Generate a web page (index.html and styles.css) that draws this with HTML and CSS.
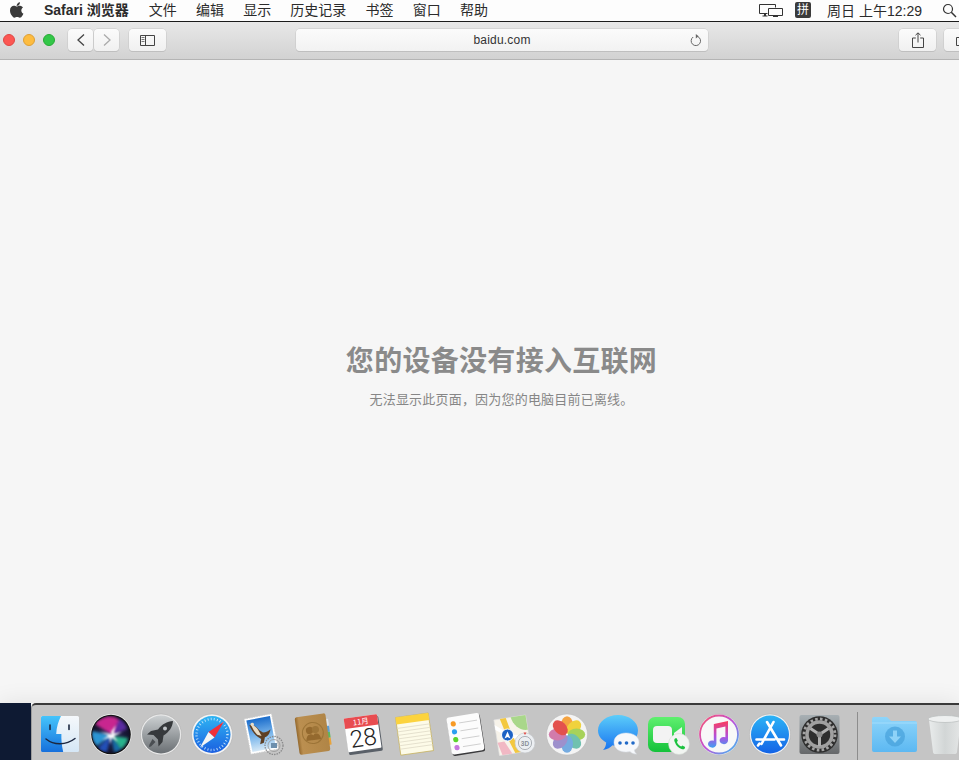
FILE: index.html
```html
<!DOCTYPE html>
<html lang="zh">
<head>
<meta charset="utf-8">
<title>baidu.com</title>
<link rel="stylesheet" href="styles.css">
</head>
<body>
<div class="screen">
  <header class="menubar">
    <svg class="apple" viewBox="0 0 14 16" width="14" height="16"><path fill="#3a3a3a" d="M9.900 0.200c.1 1-.3 1.900-.8 2.600-.6.700-1.500 1.200-2.400 1.100-.1-.9.3-1.900.9-2.500C8.200.7 9.200.2 9.900.2zM13 5.400c-.1.100-1.700 1-1.700 3 0 2.300 2 3.100 2.100 3.100 0 .1-.3 1.100-1.100 2.200-.7 1-1.400 2-2.500 2-1.100 0-1.400-.6-2.700-.6-1.200 0-1.700.6-2.700.6-1.100 0-1.800-.9-2.600-2.100C.7 12.200 0 10.200 0 8.400c0-3 2-4.600 3.900-4.600 1.100 0 1.900.7 2.600.7.700 0 1.700-.8 3-.8.500 0 2.300.1 3.500 1.700z"/></svg>
    <nav class="menus">
      <span class="menu strong">Safari 浏览器</span>
      <span class="menu">文件</span>
      <span class="menu">编辑</span>
      <span class="menu">显示</span>
      <span class="menu">历史记录</span>
      <span class="menu">书签</span>
      <span class="menu">窗口</span>
      <span class="menu">帮助</span>
    </nav>
    <div class="status">
      <svg class="airplay" viewBox="0 0 24 15" width="24" height="15"><path fill="none" stroke="#333" stroke-width="1" d="M8.500 10.500H.5V1.500h16v3M9.500 5.500h14v7h-14z"/><path fill="#333" d="M3.500 12.500h5v1h-5zM5 10.500h2v2H5zM14 12.500h5v1.500h-5zM15.500 12h2v1h-2z"/></svg>
      <span class="ime">拼</span>
      <span class="clock">周日 上午12:29</span>
      <svg class="search" viewBox="0 0 15 15" width="15" height="15"><circle cx="6" cy="6" r="4.500" fill="none" stroke="#333" stroke-width="1.200"/><path d="M9.300 9.300l4.700 4.700" stroke="#333" stroke-width="1.500"/></svg>
    </div>
  </header>

  <section class="toolbar">
    <div class="lights">
      <i class="light red"></i><i class="light yellow"></i><i class="light green"></i>
    </div>
    <div class="nav-pair">
      <button class="btn nav"><svg viewBox="0 0 10 14" width="10" height="14"><path d="M8 1.500L2 7l6 5.500" fill="none" stroke="#444" stroke-width="1.300"/></svg></button>
      <button class="btn nav"><svg viewBox="0 0 10 14" width="10" height="14"><path d="M2 1.500L8 7l-6 5.500" fill="none" stroke="#aaa" stroke-width="1.300"/></svg></button>
    </div>
    <button class="btn side"><svg viewBox="0 0 15 11" width="15" height="11"><path d="M.5.500h14v10H.5zM5.500.500v10" fill="none" stroke="#444"/><path d="M1.500 2.500h3M1.500 4.500h3M1.500 6.500h3" stroke="#777"/></svg></button>
    <div class="address">
      <span class="url">baidu.com</span>
      <svg class="reload" viewBox="0 0 12 13" width="12" height="13"><path d="M7.800 2.600A4.700 4.700 0 1 1 3.200 3" fill="none" stroke="#666"/><path d="M5.800 0v4.400l2.800-2.200z" fill="#666"/></svg>
    </div>
    <button class="btn share"><svg viewBox="0 0 12 16" width="12" height="16"><path d="M3.800 6H.5v9.500h11V6H8.200M6 10.500V1M3.500 3.200L6 .8l2.500 2.400" fill="none" stroke="#444"/></svg></button>
    <button class="btn tabs"><svg viewBox="0 0 14 12" width="14" height="12"><path d="M.5 3.500h9v8h-9z" fill="none" stroke="#444"/></svg></button>
  </section>

  <main class="page">
    <h1 class="title">您的设备没有接入互联网</h1>
    <p class="sub">无法显示此页面，因为您的电脑目前已离线。</p>
  </main>

  <footer class="bottom">
    <div class="wallpaper"></div>
    <div class="dock">
      <!-- Finder -->
      <svg class="icon" viewBox="0 0 44 44"><defs><linearGradient id="fb" x1="0" y1="0" x2="0" y2="1"><stop offset="0" stop-color="#45c4fb"/><stop offset="1" stop-color="#1670dc"/></linearGradient><linearGradient id="fw" x1="0" y1="0" x2="0" y2="1"><stop offset="0" stop-color="#f5f8fb"/><stop offset="1" stop-color="#d5e7f6"/></linearGradient></defs><rect x="3" y="4" width="38" height="36" rx="1.500" fill="url(#fw)"/><path d="M4.500 4H23c-2.500 5-4.500 11-4.800 18h5.200c-.2 5 .2 11 1.800 18H4.500A1.500 1.500 0 0 1 3 38.500v-33A1.500 1.500 0 0 1 4.500 4z" fill="url(#fb)"/><path d="M12 13v4.500M31 13v4.500" stroke="#1c2740" stroke-width="1.600" stroke-linecap="round"/><path d="M8 27c8 6.500 20 6.500 29-.5" fill="none" stroke="#1c2740" stroke-width="1.500" stroke-linecap="round"/></svg>
      <!-- Siri -->
      <svg class="icon" viewBox="0 0 44 44"><defs><radialGradient id="sb" cx=".5" cy=".5" r=".55"><stop offset="0" stop-color="#2e2e66"/><stop offset="1" stop-color="#0e0e20"/></radialGradient><filter id="sblur" x="-20%" y="-20%" width="140%" height="140%"><feGaussianBlur stdDeviation="1.800"/></filter><filter id="sblur2" x="-30%" y="-30%" width="160%" height="160%"><feGaussianBlur stdDeviation="1"/></filter><clipPath id="sclip"><circle cx="22" cy="22.500" r="18.800"/></clipPath></defs><circle cx="22" cy="22.500" r="20.500" fill="#f2f2f2"/><circle cx="22" cy="22.500" r="19.800" fill="#111"/><circle cx="22" cy="22.500" r="18.800" fill="url(#sb)"/><g clip-path="url(#sclip)"><g filter="url(#sblur)"><path d="M6 12C12 4 24 2 30 8L23 23z" fill="#c8258f"/><path d="M30 7c4 2 7 6 8 10L23 23z" fill="#5a2aa0"/><path d="M3 19c-1 6 1 11 5 15L22 23z" fill="#2a95d4"/><path d="M9 36c3 3 6 4 9 4L22 23z" fill="#2450b8"/><path d="M23 24L39 26c-1 5-3 8-7 11z" fill="#28b48c"/><path d="M22 24l3 16c3 0 5-1 7-3z" fill="#186aa8"/></g><path d="M23 22.500L19 14 22 20 27 13 24.500 21.500 33 20 25 24 29 30 23 25.500 21 32 20.500 25.500 13 28 19.500 23.500 11 20z" fill="#fff" filter="url(#sblur2)"/></g></svg>
      <!-- Launchpad -->
      <svg class="icon" viewBox="0 0 44 44"><defs><linearGradient id="lp" x1="0" y1="0" x2="0" y2="1"><stop offset="0" stop-color="#ccd0d2"/><stop offset="1" stop-color="#6a6f73"/></linearGradient></defs><circle cx="22" cy="22.500" r="20.500" fill="#eaeaea" stroke="#aaa" stroke-width=".5"/><circle cx="22" cy="22.500" r="19" fill="url(#lp)"/><path d="M34 9c-6 .5-11 3-15 8.500l-7 1.500-4 3.500 6.500.5 4.500 4.500.5 7 4-4.500 1-6.500C30 20 33.500 15.500 34 9z" fill="#36393c"/><circle cx="26" cy="16.500" r="2" fill="#c0c4c8"/><path d="M13.500 27l3 3-4.500 4.500-2 .5.500-2.500z" fill="#4a4e52"/></svg>
      <!-- Safari -->
      <svg class="icon" viewBox="0 0 44 44"><defs><linearGradient id="sf" x1="0" y1="0" x2="0" y2="1"><stop offset="0" stop-color="#2fb5f3"/><stop offset="1" stop-color="#1a5ee0"/></linearGradient></defs><circle cx="22" cy="22.500" r="20.500" fill="#f4f4f4" stroke="#aaa" stroke-width=".5"/><circle cx="22" cy="22.500" r="18.500" fill="url(#sf)"/><circle cx="22" cy="22.500" r="15.500" fill="none" stroke="#cfeafc" stroke-width="2.400" stroke-dasharray=".8 2.300"/><path d="M34 9.500L18.500 20 24.500 25.500z" fill="#f0303a"/><path d="M10 35.500L24.500 25.500 18.500 20z" fill="#f4f4f4"/></svg>
      <!-- Mail -->
      <svg class="icon" viewBox="0 0 44 44"><defs><linearGradient id="ml" x1="0" y1="0" x2="0" y2="1"><stop offset="0" stop-color="#1a6ccb"/><stop offset=".55" stop-color="#7db8ec"/><stop offset="1" stop-color="#d5e8f6"/></linearGradient></defs><g transform="rotate(-11 20 21)"><rect x="6" y="4" width="28" height="36" fill="#fff" stroke="#ccc" stroke-width=".8" stroke-dasharray="1.500 1"/><rect x="8" y="6" width="24" height="32" fill="url(#ml)"/><path d="M10 11c4 0 7 3 9 7l3 3c3 0 6-.5 8-2-1 3-3 6-7 7l-2 5-4 1 2-5-3-3c-3-3-5-8-6-13z" fill="#5e4025"/><path d="M12 12c3 0 5 3 6 6l2 6-4-2c-2-3-3-6-4-10z" fill="#e8dcc6"/><circle cx="13" cy="11" r="1.800" fill="#e8dcc6"/></g><circle cx="33" cy="33.500" r="9" fill="none" stroke="#8a8a8b" stroke-width="1.300" stroke-dasharray="1.500 1"/><circle cx="33" cy="33.500" r="6" fill="none" stroke="#959596" stroke-width=".8"/><path d="M30 31h6v5h-6z" fill="#6d8fad"/></svg>
      <!-- Contacts -->
      <svg class="icon" viewBox="0 0 44 44"><defs><linearGradient id="ct" x1="0" y1="0" x2="1" y2="0"><stop offset="0" stop-color="#94692e"/><stop offset=".12" stop-color="#bb8f50"/><stop offset="1" stop-color="#b08546"/></linearGradient></defs><g transform="rotate(-8 22 22)"><rect x="36" y="9" width="3" height="7" fill="#dfe5ea"/><rect x="36" y="16" width="3" height="6" fill="#5a9ed6"/><rect x="36" y="22" width="3" height="6" fill="#5cb85c"/><rect x="36" y="28" width="3" height="7" fill="#e8a33a"/><rect x="6" y="3" width="31" height="38" rx="2" fill="url(#ct)"/><circle cx="22" cy="21" r="10.500" fill="none" stroke="#9c7437" stroke-width="1"/><circle cx="19" cy="18" r="3.600" fill="#94692e"/><circle cx="25" cy="18" r="3.600" fill="#9e7538"/><path d="M14.500 28c.5-4 2-6 4.500-6s4 2 4.500 6zM20.500 28c.5-4 2-6 4.500-6s4 2 4.500 6z" fill="#94692e"/></g></svg>
      <!-- Calendar -->
      <svg class="icon" viewBox="0 0 44 44"><g transform="rotate(-8 22 22)"><rect x="4.500" y="6" width="34" height="35" rx="1.500" fill="#5a6068"/><rect x="4" y="4" width="33.500" height="34" rx="1" fill="#fff"/><path d="M4 5a1 1 0 0 1 1-1h31.500a1 1 0 0 1 1 1v9.500H4z" fill="#e84c50"/><text class="cal-m" x="20.500" y="12" text-anchor="middle">11月</text><text class="cal-d" x="20.800" y="34" text-anchor="middle">28</text></g></svg>
      <!-- Notes -->
      <svg class="icon" viewBox="0 0 44 44"><g transform="rotate(-8 22 22)"><rect x="5" y="3" width="33" height="38" fill="#fdfbe8" stroke="#c5ae52" stroke-width=".7"/><rect x="5" y="3" width="33" height="7" fill="#fcd33d"/><path d="M5 14h33M5 17.500h33M5 21h33M5 24.500h33M5 28h33M5 31.500h33M5 35h33" stroke="#e0dcc9" stroke-width=".8"/></g></svg>
      <!-- Reminders -->
      <svg class="icon" viewBox="0 0 44 44"><g transform="rotate(-9 22 22)"><rect x="5.500" y="4" width="33" height="38" rx="2.500" fill="#3a3a3c"/><rect x="5" y="3" width="33" height="37.500" rx="2.500" fill="#fcfcfc"/><circle cx="11" cy="10" r="2.600" fill="#f79a25"/><circle cx="11" cy="18" r="2.600" fill="#2c9ff0"/><circle cx="11" cy="26" r="2.600" fill="#5bd42e"/><circle cx="11" cy="34" r="2.600" fill="#c678df"/><path d="M17 10h18M17 18h18M17 26h18M17 34h18" stroke="#c8c8c8" stroke-width=".8"/></g></svg>
      <!-- Maps -->
      <svg class="icon" viewBox="0 0 44 44"><g transform="rotate(-9 20 20)"><rect x="2" y="5" width="32" height="36" fill="#f7f3ea" stroke="#e3e3e3" stroke-width=".6"/><path d="M19 5h15v15c-8 0-14-7-15-15z" fill="#a9d78a"/><path d="M8 5h6l4 19 6 17h-6l-5-15z" fill="#f3c83f"/><path d="M2 10l14 12 18 4v3l-19-4L2 15z" fill="#fff"/><path d="M2 28h7l6 13H5z" fill="#f1b8c4"/></g><circle cx="13.500" cy="23" r="6" fill="#1d62c4" stroke="#fff"/><path d="M13.500 19.500l3 7-3-1.500-3 1.500z" fill="#fff"/><circle cx="31" cy="31" r="10" fill="#eceff2" stroke="#c5c8cb" stroke-width=".6"/><circle cx="31" cy="31" r="6.600" fill="none" stroke="#9aa0a6" stroke-width=".8"/><path d="M29.500 20.500h3l-1.500 2.500z" fill="#e34b45"/><text class="map-3d" x="31" y="33.500" text-anchor="middle">3D</text></svg>
      <!-- Photos -->
      <svg class="icon" viewBox="0 0 44 44"><circle cx="22" cy="22.500" r="20.500" fill="#f4f4f4" stroke="#b5b5b5" stroke-width=".5"/><g transform="translate(22 22.500)"><g opacity=".9"><ellipse cy="-9.500" rx="6" ry="8.700" fill="#f59b2e"/><ellipse cy="-9.500" rx="6" ry="8.700" fill="#f0cf2a" transform="rotate(45)"/><ellipse cy="-9.500" rx="6" ry="8.700" fill="#9fcf4a" transform="rotate(90)"/><ellipse cy="-9.500" rx="6" ry="8.700" fill="#62bca8" transform="rotate(135)"/><ellipse cy="-9.500" rx="6" ry="8.700" fill="#68a4de" transform="rotate(180)"/><ellipse cy="-9.500" rx="6" ry="8.700" fill="#9486c8" transform="rotate(225)"/><ellipse cy="-9.500" rx="6" ry="8.700" fill="#cf6fa4" transform="rotate(270)"/><ellipse cy="-9.500" rx="6" ry="8.700" fill="#e2403c" transform="rotate(315)"/></g><circle r="1" fill="#fff"/></g></svg>
      <!-- Messages -->
      <svg class="icon" viewBox="0 0 44 44"><defs><linearGradient id="ms" x1="0" y1="0" x2="0" y2="1"><stop offset="0" stop-color="#5ccdfa"/><stop offset="1" stop-color="#1874f0"/></linearGradient></defs><path d="M22 3c11 0 20 6.500 20 15.500S33 34 22 34c-2 0-4-.2-5.500-.7-2 2-5 4.200-9.500 4.700 2-2 3-4.500 3.200-7.500C5 27.500 2 23.500 2 18.500 2 9.500 11 3 22 3z" fill="url(#ms)"/><path d="M30 21c7 0 13 3.500 13 9.500 0 3.500-2 6-4.800 7.500.3 1.500 1 3 2.300 4-3 0-5-1-6.500-2.500-1.300.3-2.700.5-4 .5-7 0-12-3.800-12-9.500S23 21 30 21z" fill="#f6f8fb" stroke="#dde3ea" stroke-width=".5"/><circle cx="24" cy="31" r="1.800" fill="#2069c8"/><circle cx="30.500" cy="31" r="1.800" fill="#2069c8"/><circle cx="37" cy="31" r="1.800" fill="#2069c8"/></svg>
      <!-- FaceTime -->
      <svg class="icon" viewBox="0 0 44 44"><defs><linearGradient id="ft" x1="0" y1="0" x2="0" y2="1"><stop offset="0" stop-color="#5ff06f"/><stop offset="1" stop-color="#14c13a"/></linearGradient></defs><rect x="2" y="5" width="37" height="35" rx="7" fill="url(#ft)"/><rect x="7" y="14" width="19" height="17" rx="4" fill="#f3f3f3"/><path d="M28 21l8-6v15l-8-6z" fill="#f3f3f3"/><circle cx="33" cy="32" r="10.500" fill="#f2f5f2" stroke="#cfd4cf" stroke-width=".5"/><path d="M29 26.500c-1 1-1 2 0 4 1 3 3.500 5.500 6.500 6.500 1.500.4 2.500.3 3.200-.6l.4-1.400-2.700-1.500-1.200 1c-2-1-3.500-2.500-4.300-4.500l1-1.200-1.500-2.800z" fill="#1cc23f"/></svg>
      <!-- Music -->
      <svg class="icon" viewBox="0 0 44 44"><defs><linearGradient id="mr" x1="0" y1="0" x2="1" y2="1"><stop offset="0" stop-color="#f9566a"/><stop offset=".5" stop-color="#c04fd8"/><stop offset="1" stop-color="#35c4f2"/></linearGradient><linearGradient id="mn" x1="0" y1="0" x2="0" y2="1"><stop offset="0" stop-color="#fb3c5c"/><stop offset=".6" stop-color="#b050e0"/><stop offset="1" stop-color="#3f9ff0"/></linearGradient></defs><circle cx="22" cy="22.500" r="20.500" fill="#f8f8f8" stroke="#b5b5b5" stroke-width=".5"/><circle cx="22" cy="22.500" r="19" fill="none" stroke="url(#mr)" stroke-width="1.800"/><path d="M17 12l14-3v19.500a4.200 3.600 0 1 1-2.600-3.300V14.500l-9 2V32a4.200 3.600 0 1 1-2.600-3.300V12.300z" fill="url(#mn)"/></svg>
      <!-- App Store -->
      <svg class="icon" viewBox="0 0 44 44"><defs><linearGradient id="as" x1="0" y1="0" x2="0" y2="1"><stop offset="0" stop-color="#2bb3f6"/><stop offset="1" stop-color="#1463e6"/></linearGradient></defs><circle cx="22" cy="22.500" r="20.500" fill="#f2f2f2" stroke="#aaa" stroke-width=".5"/><circle cx="22" cy="22.500" r="19" fill="url(#as)"/><path d="M19 10l14 23.500M25.500 10L13.500 32M8.500 27.500h18M30.500 27.500H36M11.500 31.500l-1.500 2" fill="none" stroke="#fff" stroke-width="2.600" stroke-linecap="round"/></svg>
      <!-- System Preferences -->
      <svg class="icon" viewBox="0 0 44 44"><defs><linearGradient id="sp" x1="0" y1="0" x2="0" y2="1"><stop offset="0" stop-color="#a8b0b4"/><stop offset="1" stop-color="#66686a"/></linearGradient></defs><rect x="1.500" y="3" width="40" height="39" rx="2" fill="url(#sp)"/><circle cx="21.500" cy="22.500" r="18.300" fill="#2e2e2e"/><circle cx="21.500" cy="22.500" r="15.500" fill="none" stroke="#a4a4a4" stroke-width="2.800" stroke-dasharray="2.600 2.270"/><circle cx="21.500" cy="22.500" r="12.500" fill="none" stroke="#a0a0a0" stroke-width="3.500"/><path d="M21.500 22.500l-9-6M21.500 22.500l9-6M21.500 22.500V34" stroke="#b0b0b0" stroke-width="3"/><circle cx="21.500" cy="22.500" r="3" fill="#8c8c8c"/></svg>
      <div class="divider"></div>
      <!-- Downloads -->
      <svg class="icon" viewBox="0 0 44 44"><defs><linearGradient id="dl" x1="0" y1="0" x2="0" y2="1"><stop offset="0" stop-color="#8ed5fa"/><stop offset="1" stop-color="#5cb8f2"/></linearGradient></defs><path d="M-1 7a2 2 0 0 1 2-2h13l4 4h24a2 2 0 0 1 2 2v27a2 2 0 0 1-2 2H1a2 2 0 0 1-2-2z" fill="url(#dl)"/><path d="M-1 11h45" stroke="#a9e0fc" stroke-width=".8"/><circle cx="22" cy="24.500" r="10" fill="#4aa3dc" opacity=".75"/><path d="M20 18.500h4v6h4L22 31l-6-6.500h4z" fill="#8ed2f8"/></svg>
      <!-- Trash -->
      <svg class="icon" viewBox="0 0 44 44"><defs><linearGradient id="tr" x1="0" y1="0" x2="1" y2="0"><stop offset="0" stop-color="#e9ecec"/><stop offset=".5" stop-color="#d2d6d6"/><stop offset="1" stop-color="#e4e6e6"/></linearGradient></defs><path d="M6 8l4 32c.2 1.500 1 2 2.500 2h19c1.500 0 2.300-.5 2.500-2l4-32z" fill="url(#tr)"/><ellipse cx="22" cy="7" rx="17" ry="3.500" fill="#eef0f0" stroke="#b8bcbc" stroke-width=".7"/></svg>
    </div>
  </footer>
</div>
</body>
</html>
```

FILE: styles.css
```css
* { box-sizing: border-box; }
html, body { margin: 0; padding: 0; height: 100%; overflow: hidden; }
body { font-family: "Liberation Sans", "Noto Sans CJK SC", sans-serif; background: #f6f6f6; }
.screen { width: 959px; height: 760px; display: flex; flex-direction: column; overflow: hidden; }

.menubar { height: 22px; flex: none; background: #fdfdfd; border-bottom: 1px solid #1c1c1c; display: flex; align-items: center; padding: 0 2px 1px 10px; color: #2b2b2b; font-size: 14px; }
.apple { margin-right: 20px; flex: none; }
.menus { display: flex; gap: 19.200px; }
.menu { white-space: nowrap; line-height: 20px; }
.strong { font-weight: 700; margin-right: .8px; }
.status { margin-left: auto; display: flex; align-items: center; }
.airplay { margin-right: 12px; }
.ime { width: 16px; height: 16px; border-radius: 2px; background: #3b3b3b; color: #fff; font-size: 12px; line-height: 16px; text-align: center; margin-right: 16px; }
.clock { white-space: nowrap; margin-right: 20px; }
.search { flex: none; }

.toolbar { height: 38px; flex: none; background: linear-gradient(#e8e8e8, #d2d2d2); border-bottom: 1px solid #b4b4b4; display: flex; align-items: center; padding: 0 0 1px 3px; }
.lights { display: flex; gap: 8px; margin-right: 13px; flex: none; }
.light { width: 12px; height: 12px; border-radius: 50%; display: block; }
.red { background: #fc5753; border: 1px solid #df4744; }
.yellow { background: #fdbc40; border: 1px solid #de9f34; }
.green { background: #33c748; border: 1px solid #27aa35; }
.btn { padding: 0; height: 22px; background: linear-gradient(#fbfbfb, #f0f0f0); border: 0; border-radius: 4px; box-shadow: 0 0 0 .5px #c6c6c6, 0 1px 0 #b9b9b9; display: flex; align-items: center; justify-content: center; flex: none; }
.nav-pair { display: flex; gap: 1px; margin-right: 10px; flex: none; }
.nav { width: 25px; }
.side { width: 37px; margin-right: 130px; }
.address { width: 412px; height: 22px; flex: none; background: linear-gradient(#fbfbfb, #f2f2f2); border-radius: 4px; box-shadow: 0 0 0 .5px #c6c6c6, 0 1px 0 #b9b9b9; display: flex; align-items: center; justify-content: center; position: relative; margin-right: 191px; }
.url { font-size: 12px; letter-spacing: .2px; color: #333; }
.reload { position: absolute; right: 6px; top: 5px; }
.share { width: 37px; margin-right: 8px; }
.tabs { width: 37px; }

.page { flex: 1; display: flex; flex-direction: column; align-items: center; min-height: 0; padding: 281px 0 0 44px; }
.title { margin: 0; font-family: "Noto Sans CJK SC", sans-serif; font-size: 28px; letter-spacing: .3px; line-height: 36px; font-weight: 700; color: #8a8a8a; }
.sub { margin: 13px 0 0; font-family: "Noto Sans CJK SC", sans-serif; font-size: 13px; letter-spacing: .2px; line-height: 18px; color: #868686; }

.bottom { height: 57px; flex: none; display: flex; position: relative; box-shadow: 0 0 24px rgba(0,0,0,.09); }
.wallpaper { width: 31px; flex: none; background: #0e1a33; }
.dock { flex: none; width: 1000px; background: #c5c5c5; border-top: 2px solid #3a3a3a; border-left: 1px solid #9c9c9c; border-top-left-radius: 5px; display: flex; align-items: flex-start; gap: 6.700px; padding: 7px 0 0 6px; }
.icon { width: 44px; height: 44px; flex: none; overflow: visible; }
.divider { width: 1px; height: 48px; background: #8d8d8d; margin: 0 8px; flex: none; }
.cal-m { font-family: "Noto Sans CJK SC", sans-serif; font-size: 7.500px; fill: #fff; }
.cal-d { font-family: Roboto, "Liberation Sans", sans-serif; font-weight: 300; font-size: 24px; fill: #222; }
.map-3d { font-family: "Liberation Sans", sans-serif; font-size: 6.500px; font-weight: 700; fill: #8a9098; }
```
